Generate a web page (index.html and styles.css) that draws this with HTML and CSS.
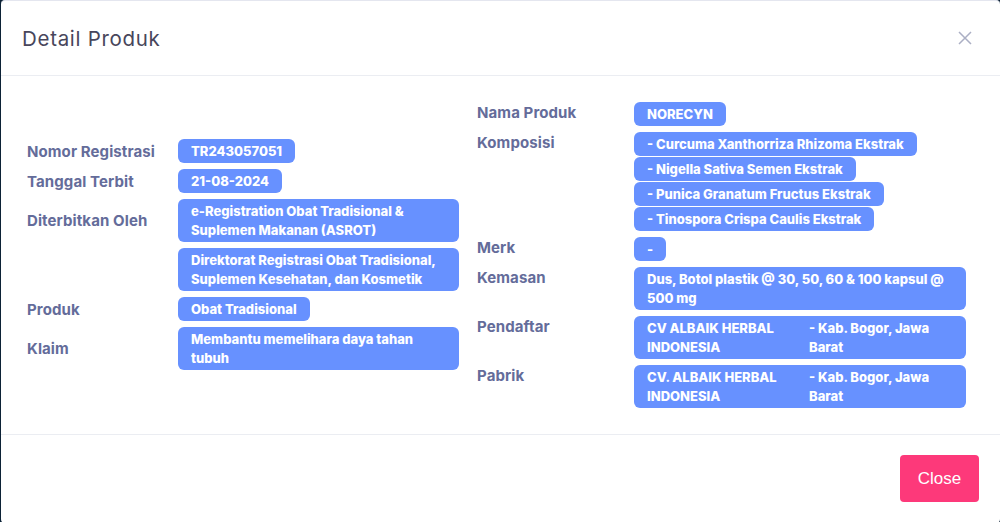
FILE: index.html
```html
<!DOCTYPE html>
<html lang="id">
<head>
<meta charset="utf-8">
<title>Detail Produk</title>
<link rel="stylesheet" href="styles.css">
</head>
<body>
<div class="modal">
  <div class="modal-header">
    <h5 class="modal-title">Detail Produk</h5>
    <button class="close" aria-label="Close">
      <svg width="14" height="14" viewBox="0 0 14 14"><path d="M1 1L13 13M13 1L1 13" stroke="#abafc4" stroke-width="1.5" fill="none"/></svg>
    </button>
  </div>
  <div class="modal-body">
    <div class="col col-left">
      <div class="label">Nomor Registrasi</div>
      <div class="value"><span class="badge">TR243057051</span></div>
      <div class="label">Tanggal Terbit</div>
      <div class="value"><span class="badge">21-08-2024</span></div>
      <div class="label">Diterbitkan Oleh</div>
      <div class="value"><span class="badge">e-Registration Obat Tradisional &amp; Suplemen Makanan (ASROT)</span></div>
      <div class="label"></div>
      <div class="value"><span class="badge">Direktorat Registrasi Obat Tradisional, Suplemen Kesehatan, dan Kosmetik</span></div>
      <div class="label">Produk</div>
      <div class="value"><span class="badge">Obat Tradisional</span></div>
      <div class="label">Klaim</div>
      <div class="value"><span class="badge">Membantu memelihara daya tahan tubuh</span></div>
    </div>
    <div class="col col-right">
      <div class="label">Nama Produk</div>
      <div class="value"><span class="badge">NORECYN</span></div>
      <div class="label">Komposisi</div>
      <div class="value stack">
        <span class="badge">- Curcuma Xanthorriza Rhizoma Ekstrak</span>
        <span class="badge">- Nigella Sativa Semen Ekstrak</span>
        <span class="badge">- Punica Granatum Fructus Ekstrak</span>
        <span class="badge">- Tinospora Crispa Caulis Ekstrak</span>
      </div>
      <div class="label">Merk</div>
      <div class="value"><span class="badge">-</span></div>
      <div class="label">Kemasan</div>
      <div class="value"><span class="badge">Dus, Botol plastik @ 30, 50, 60 &amp; 100 kapsul @ 500 mg</span></div>
      <div class="label">Pendaftar</div>
      <div class="value"><div class="badge split"><span>CV ALBAIK HERBAL INDONESIA</span><span>- Kab. Bogor, Jawa Barat</span></div></div>
      <div class="label">Pabrik</div>
      <div class="value"><div class="badge split"><span>CV. ALBAIK HERBAL INDONESIA</span><span>- Kab. Bogor, Jawa Barat</span></div></div>
    </div>
  </div>
  <div class="modal-footer">
    <button class="btn-close">Close</button>
  </div>
</div>
</body>
</html>
```
FILE: styles.css
```css
* { box-sizing: border-box; }
html, body { margin: 0; padding: 0; }
body {
  background: #0c2236;
  font-family: Inter, "Open Sans", sans-serif;
  height: 522px;
  overflow: hidden;
}
.modal {
  margin-left: 1px;
  background: #fff;
  border-top: 1px solid #e4e6ef;
  border-radius: 4px;
  height: 523px;
}
.modal-header {
  display: flex;
  align-items: center;
  justify-content: space-between;
  padding: 0 28px 0 21px;
  height: 75px;
  border-bottom: 1px solid #ebedf2;
}
.modal-title {
  margin: 0;
  font-size: 20.5px;
  font-weight: 400;
  color: #48465b;
  letter-spacing: 0.7px;
}
.close {
  background: none;
  border: 0;
  padding: 0;
  width: 14px;
  height: 14px;
  display: flex;
}
.modal-body {
  display: flex;
  align-items: center;
  padding: 24px 33px 25px 26px;
  height: 359px;
  border-bottom: 1px solid #ebedf2;
}
.col {
  display: grid;
  row-gap: 6px;
  align-items: center;
}
.col-left {
  width: 432px;
  grid-template-columns: 151px 281px;
}
.col-right {
  margin-left: 18px;
  width: 489px;
  grid-template-columns: 157px 332px;
  align-items: start;
}
.label {
  font-size: 15px;
  font-weight: 700;
  color: #646c9a;
  letter-spacing: 0.1px;
}
.col-right .label { line-height: 22px; }
.value { display: flex; }
.value.stack { flex-direction: column; align-items: flex-start; gap: 1px; }
.badge {
  display: inline-block;
  background: #6791ff;
  color: #fff;
  font-size: 13px;
  font-weight: 800;
  line-height: 19px;
  padding: 3px 13px 2px;
  border-radius: 6px;
  max-width: 100%;
}
.badge.split {
  width: 100%;
  display: grid;
  grid-template-columns: 1fr 1fr;
  column-gap: 18px;
}
.modal-footer {
  display: flex;
  justify-content: flex-end;
  padding: 20px 21px;
}
.btn-close {
  background: #fd397a;
  color: #fff;
  border: 0;
  border-radius: 4px;
  width: 79px;
  height: 47px;
  font-family: "Liberation Sans", Arial, sans-serif;
  font-size: 17px;
}
```
